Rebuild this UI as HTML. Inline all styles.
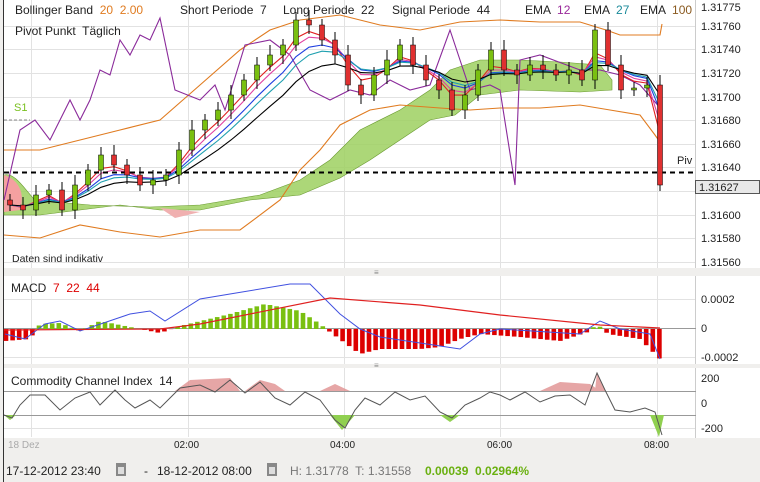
<!DOCTYPE html>
<html><head><meta charset="utf-8"><style>
body{margin:0;width:760px;height:482px;overflow:hidden;background:#f0efed;font-family:"Liberation Sans",sans-serif}
svg{position:absolute;left:0;top:0}
text{font-family:"Liberation Sans",sans-serif;white-space:pre}
</style></head><body>
<svg id="s" width="760" height="482" viewBox="0 0 760 482">
<rect x="0" y="0" width="760" height="455" fill="#f0efed"/>
<rect x="4" y="0" width="692" height="268" fill="#fff"/>
<rect x="696" y="0" width="64" height="268" fill="#fff"/>
<rect x="4" y="276" width="692" height="88" fill="#fff"/>
<rect x="4" y="368" width="692" height="70" fill="#fff"/>
<rect x="696" y="276" width="64" height="162" fill="#fff"/>
<line x1="3.5" y1="0" x2="3.5" y2="482" stroke="#333"/>
<g stroke="#e2e2e2" stroke-width="1">
<line x1="4" y1="26.5" x2="696" y2="26.5"/><line x1="4" y1="49.5" x2="696" y2="49.5"/><line x1="4" y1="73.5" x2="696" y2="73.5"/><line x1="4" y1="97.5" x2="696" y2="97.5"/><line x1="4" y1="120.5" x2="696" y2="120.5"/><line x1="4" y1="144.5" x2="696" y2="144.5"/><line x1="4" y1="167.5" x2="696" y2="167.5"/><line x1="4" y1="191.5" x2="696" y2="191.5"/><line x1="4" y1="215.5" x2="696" y2="215.5"/><line x1="4" y1="238.5" x2="696" y2="238.5"/><line x1="4" y1="262.5" x2="696" y2="262.5"/>
<line x1="4" y1="299.5" x2="696" y2="299.5"/><line x1="4" y1="357.5" x2="696" y2="357.5"/>
<line x1="31.5" y1="0" x2="31.5" y2="437"/><line x1="188.5" y1="0" x2="188.5" y2="437"/><line x1="344.5" y1="0" x2="344.5" y2="437"/><line x1="500.5" y1="0" x2="500.5" y2="437"/><line x1="657.5" y1="0" x2="657.5" y2="437"/>
<line x1="4" y1="428.5" x2="696" y2="428.5"/>
</g>
<line x1="695.5" y1="0" x2="695.5" y2="438" stroke="#ccc"/>
<rect x="4" y="268" width="756" height="8" fill="#f0efed"/>
<rect x="4" y="364" width="756" height="4" fill="#f0efed"/>
<text x="374" y="275" font-size="8" fill="#888">≡</text>
<text x="374" y="368" font-size="8" fill="#888">≡</text>
<g stroke="#999" stroke-width="1"><line x1="4" y1="328.5" x2="696" y2="328.5"/><line x1="4" y1="391.5" x2="696" y2="391.5"/><line x1="4" y1="415.5" x2="696" y2="415.5"/></g>
<path d="M4,175 C15,172 25,190 35,200 L90,205 L150,207 L200,205 L260,195 L300,180 L330,160 L360,130 L400,110 L430,90 L450,70 L480,60 L520,60 L560,62 L600,65 L612,80 L612,90 L580,92 L520,90 L480,95 L455,115 L430,120 L400,140 L370,160 L340,178 L300,195 L250,200 L200,210 L160,210 L120,205 L80,210 L40,215 L4,215 Z" fill="#9ed060" fill-opacity="0.85" stroke="#6a9a30" stroke-width="0.6"/>
<path d="M4,175 C20,180 25,195 20,210 L4,212 Z" fill="#f4a0a0"/>
<path d="M160,208 L200,212 L175,218 Z" fill="#f0b0b0"/>
<g fill="none" stroke-width="1.1">
<polyline stroke="#e07b20" points="4,150 40,150 80,140 120,130 160,120 200,85 240,50 270,30 300,20 340,15 380,25 420,30 460,22 500,20 540,22 580,22 606,30 620,35 660,35 662,24"/>
<polyline stroke="#e07b20" points="4,235 40,238 80,225 120,232 160,237 200,230 240,230 280,200 300,170 320,150 340,125 370,110 400,105 440,108 470,110 500,108 540,108 580,105 610,110 640,115 655,135 662,145"/>
<polyline stroke="#8a2a9a" points="4,200 20,130 35,120 50,140 70,100 80,120 90,100 100,70 110,75 120,40 130,55 140,35 150,40 160,18 175,90 200,100 215,85 225,110 245,45 270,40 290,55 310,90 330,100 350,90 370,95 390,80 410,90 430,85 450,30 470,90 490,85 500,90 515,185 520,60 540,55 580,70 600,70 620,75 640,85 662,110"/>
</g>
<g id="ema" fill="none" stroke-width="1.1"></g>
<line x1="4" y1="172.5" x2="696" y2="172.5" stroke="#000" stroke-width="2" stroke-dasharray="5,4"/>
<line x1="4" y1="120" x2="30" y2="120" stroke="#888" stroke-dasharray="3,2"/>
<g id="candles"></g>
<g id="macd"></g>
<polyline id="mblue" fill="none" stroke="#4050e0" stroke-width="1"/>
<polyline id="mred" fill="none" stroke="#e02020" stroke-width="1.2" points="4,330 160,329 200,324 330,298 420,305 500,315 600,325 660,328"/>
<path d="M175,391 L190,380 L230,378 L240,391 Z M245,391 L260,380 L275,384 L285,391 Z M320,391 L335,384 L350,391 Z M540,391 L560,382 L590,384 L600,391 Z M595,391 L597,372 L605,391 Z" fill="#e09090" fill-opacity="0.8"/>
<path d="M4,415 L10,420 L16,415 Z M330,415 L342,430 L355,415 Z M440,415 L450,422 L460,415 Z M650,415 L659,437 L664,415 Z" fill="#90d050"/>
<polyline fill="none" stroke="#555" stroke-width="1" points="4,415 12,418 20,405 30,395 45,395 60,410 75,398 90,392 100,405 115,390 125,400 135,408 150,400 160,408 170,398 180,388 200,385 215,392 230,380 245,393 260,382 275,398 290,405 305,392 320,400 335,420 345,428 355,410 365,398 380,405 395,392 410,400 425,396 440,412 452,418 465,405 480,398 490,392 500,395 510,400 525,392 540,402 555,396 570,395 585,405 597,373 605,390 615,410 630,412 645,408 655,412 662,435"/>
<g font-size="12" fill="#222">
<text x="15" y="14">Bollinger Band  <tspan fill="#e07b20">20  2.00</tspan></text>
<text x="180" y="14">Short Periode  7</text>
<text x="283" y="14">Long Periode  22</text>
<text x="392" y="14">Signal Periode  44</text>
<text x="525" y="14">EMA  <tspan fill="#9a2a9a">12</tspan></text>
<text x="584" y="14">EMA  <tspan fill="#1a8a9a">27</tspan></text>
<text x="640" y="14">EMA  <tspan fill="#8a5a20">100</tspan></text>
<text x="15" y="35">Pivot Punkt  Täglich</text>
<text x="14" y="111" fill="#7ac020" font-size="11">S1</text>
<text x="677" y="164" font-size="11">Piv</text>
<text x="12" y="262" font-size="10.5">Daten sind indikativ</text>
<text x="11" y="292">MACD  <tspan fill="#d00">7  22  44</tspan></text>
<text x="11" y="385">Commodity Channel Index  14</text>
</g>
<g font-size="11" fill="#222">
<text x="701" y="11">1.31775</text><text x="701" y="30">1.31760</text><text x="701" y="53">1.31740</text><text x="701" y="77">1.31720</text><text x="701" y="101">1.31700</text><text x="701" y="124">1.31680</text><text x="701" y="148">1.31660</text><text x="701" y="171">1.31640</text><text x="701" y="219">1.31600</text><text x="701" y="242">1.31580</text><text x="701" y="266">1.31560</text>
<text x="701" y="303">0.0002</text><text x="701" y="332">0</text><text x="701" y="361">-0.0002</text>
<text x="701" y="382">200</text><text x="701" y="407">0</text><text x="701" y="432">-200</text>
</g>
<rect x="695.5" y="180.5" width="64" height="13" fill="#e8e8e8" stroke="#555"/>
<text x="699" y="191" font-size="11" fill="#222">1.31627</text>
<g font-size="10" fill="#222">
<text x="8" y="448" fill="#aaa">18 Dez</text><text x="174" y="448">02:00</text><text x="330" y="448">04:00</text><text x="487" y="448">06:00</text><text x="644" y="448">08:00</text>
</g>
<g font-size="12">
<text x="6" y="475" fill="#222">17-12-2012 23:40</text>
<rect x="116" y="463" width="10" height="13" fill="#888"/><rect x="118" y="467" width="6" height="7" fill="#ddd"/>
<text x="144" y="475" fill="#222">-</text>
<text x="157" y="475" fill="#222">18-12-2012 08:00</text>
<rect x="267" y="463" width="10" height="13" fill="#888"/><rect x="269" y="467" width="6" height="7" fill="#ddd"/>
<text x="290" y="475" fill="#777">H: 1.31778  T: 1.31558</text>
<text x="425" y="475" fill="#6ab010" font-weight="bold">0.00039  0.02964%</text>
</g>
</svg>
<script>
(function(){
var NS="http://www.w3.org/2000/svg",g=document.getElementById("candles");
var c=[205,210,195,190,210,185,170,155,165,175,185,180,175,150,130,120,110,95,80,65,55,45,20,25,40,55,85,95,75,60,45,65,80,90,110,95,70,50,70,75,65,70,75,70,80,30,65,90,88,85,185];
function el(t,a,p){var e=document.createElementNS(NS,t);for(var k in a)e.setAttribute(k,a[k]);p.appendChild(e);return e;}
var eg=document.getElementById("ema");
[[0.5,"#e02020"],[0.4,"#e040a0"],[0.3,"#2040e0"],[0.25,"#20a0b0"],[0.18,"#000"]].forEach(function(q){
 var v=205,pts=[];for(var i=0;i<c.length;i++){v=v+q[0]*(c[i]-v);pts.push((10+13*i)+","+v.toFixed(1));}
 el("polyline",{points:pts.join(" "),stroke:q[1],fill:"none","stroke-width":1.1},eg);});
for(var i=0;i<c.length;i++){var x=10+13*i,o=i?c[i-1]:200,cl=c[i],tp=Math.min(o,cl),bt=Math.max(o,cl);
el("line",{x1:x,x2:x,y1:tp-6-(i%3)*2,y2:bt+6+(i%2)*3,stroke:"#000"},g);
el("rect",{x:x-2.5,y:tp,width:5,height:Math.max(2,bt-tp),fill:cl<o?"#7ac010":"#e03030",stroke:"#000","stroke-width":0.5},g);}
function interp(p,x){for(var i=0;i<p.length-1;i++){if(x>=p[i][0]&&x<=p[i+1][0]){var t=(x-p[i][0])/(p[i+1][0]-p[i][0]);return p[i][1]+t*(p[i+1][1]-p[i][1]);}}return p[p.length-1][1];}
var h=[[5,-12],[30,-10],[40,5],[60,6],[80,-2],[100,8],[140,0],[160,-4],[180,3],[230,15],[265,25],[300,18],[320,5],[330,-3],[360,-25],[380,-20],[420,-20],[440,-18],[460,-10],[480,-5],[520,-8],[560,-12],[588,-3],[597,5],[608,-5],[640,-10],[660,-30]];
var m=document.getElementById("macd");
for(var x=6;x<=662;x+=6.6){var v=interp(h,x);el("rect",{x:x-2.3,y:v>0?329-v:329,width:4.6,height:Math.abs(v)||1,fill:v>0?"#7ac010":"#d00"},m);}
var b=[[5,-5],[25,-10],[45,5],[60,8],[80,-2],[130,15],[150,18],[165,8],[200,30],[230,35],[290,45],[310,45],[340,15],[360,0],[380,-8],[460,-20],[480,-5],[500,0],[580,-5],[600,8],[620,0],[650,-5],[660,-30]];
document.getElementById("mblue").setAttribute("points",b.map(function(p){return p[0]+","+(329-p[1]);}).join(" "));
})();
</script>
</body></html>
